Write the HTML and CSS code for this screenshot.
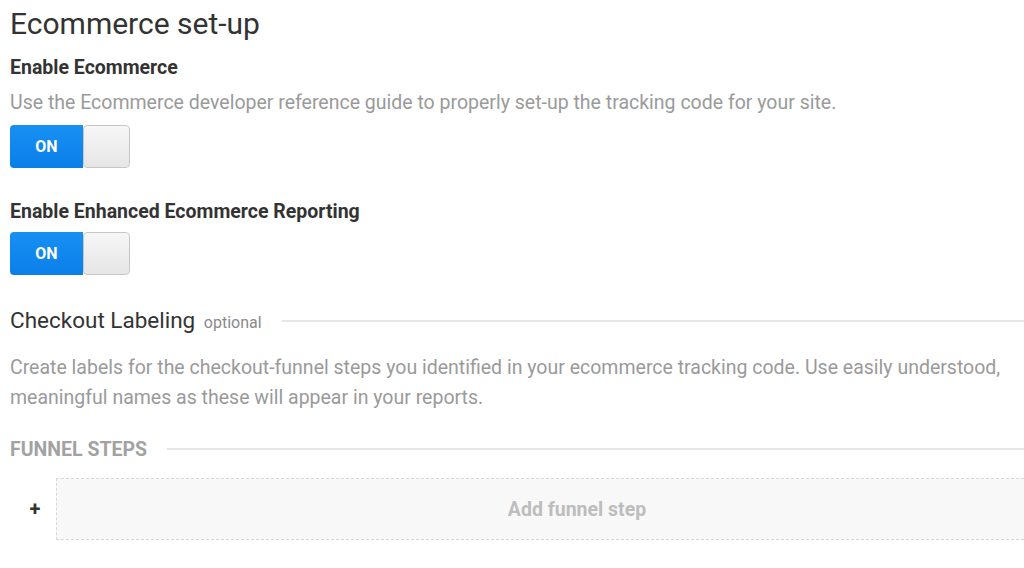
FILE: index.html
```html
<!DOCTYPE html>
<html lang="en">
<head>
    <meta charset="UTF-8">
    <meta name="viewport" content="width=device-width, initial-scale=1.0">
    <title>Ecommerce set-up</title>
    <link rel="stylesheet" href="styles.css">
</head>
<body>
    <main class="settings">
        <h1 class="page-title">Ecommerce set-up</h1>

        <section class="setting">
            <h3 class="setting-label">Enable Ecommerce</h3>
            <p class="setting-help">Use the Ecommerce developer reference guide to properly set-up the tracking code for your site.</p>
            <div class="toggle">
                <span class="toggle-on">ON</span>
                <span class="toggle-handle"></span>
            </div>
        </section>

        <section class="setting setting-tight">
            <h3 class="setting-label">Enable Enhanced Ecommerce Reporting</h3>
            <div class="toggle">
                <span class="toggle-on">ON</span>
                <span class="toggle-handle"></span>
            </div>
        </section>

        <div class="section-head">
            <h2 class="section-title">Checkout Labeling <small>optional</small></h2>
            <span class="rule"></span>
        </div>
        <p class="section-text">Create labels for the checkout-funnel steps you identified in your ecommerce tracking code. Use easily understood, meaningful names as these will appear in your reports.</p>

        <div class="section-head funnel-head">
            <h4 class="funnel-title">FUNNEL STEPS</h4>
            <span class="rule"></span>
        </div>

        <div class="funnel-row">
            <span class="funnel-plus">+</span>
            <button class="funnel-add" type="button">Add funnel step</button>
        </div>
    </main>
</body>
</html>
```

FILE: styles.css
```css
:root {
    --text-color: #333333;
    --muted-color: #9a9a9a;
    --rule-color: #e6e6e6;
}

html {
    overflow: hidden;
}

body {
    font-family: Roboto, 'Liberation Sans', Arial, sans-serif;
    margin: 0;
    padding: 4px 0 0 10px;
    background-color: #ffffff;
    color: var(--text-color);
}

/* the panel continues past the right edge of the window, so it stops there */
.settings {
    width: 1014px;
}

.page-title {
    margin: 0;
    font-size: 30px;
    line-height: 40px;
    font-weight: 400;
}

.setting {
    margin-top: 12px;
}

.setting-tight {
    margin-top: 32px;
}

.setting-label {
    margin: 0;
    font-size: 19.5px;
    line-height: 24px;
    font-weight: 700;
}

.setting-help {
    margin: 11px 0 0;
    font-size: 19.5px;
    line-height: 24px;
    color: var(--muted-color);
}

.setting-help + .toggle {
    margin-top: 10px;
}

.setting-label + .toggle {
    margin-top: 8px;
}

.toggle {
    display: flex;
    width: 120px;
    height: 43px;
    border-radius: 4px;
    overflow: hidden;
}

.toggle-on {
    width: 73px;
    display: flex;
    align-items: center;
    justify-content: center;
    background: linear-gradient(#1790f3, #0a7fe9);
    color: white;
    font-size: 16px;
    font-weight: 700;
}

.toggle-handle {
    flex: 1;
    background: linear-gradient(#f6f6f6, #e6e6e6);
    border: 1px solid #c6c6c6;
    border-radius: 4px;
}

.section-head {
    display: flex;
    align-items: center;
    margin-top: 30px;
}

.section-title {
    margin: 0;
    font-size: 22.5px;
    line-height: 30px;
    font-weight: 400;
    white-space: nowrap;
}

.section-title small {
    font-size: 16px;
    color: #8a8a8a;
    margin-left: 3px;
}

.rule {
    flex: 1;
    height: 2px;
    margin-left: 20px;
    margin-bottom: 2px;
    background-color: var(--rule-color);
}

.section-text {
    margin: 15px 0 0;
    width: 1000px;
    font-size: 19.5px;
    line-height: 30px;
    color: var(--muted-color);
}

.funnel-head {
    margin-top: 25px;
}

.funnel-title {
    margin: 0;
    font-size: 19.5px;
    line-height: 24px;
    font-weight: 700;
    color: #a2a2a2;
    white-space: nowrap;
}

.funnel-row {
    display: flex;
    align-items: center;
    margin-top: 16px;
}

.funnel-plus {
    width: 46px;
    box-sizing: border-box;
    padding-left: 4px;
    text-align: center;
    font-size: 20px;
    font-weight: 700;
    color: #333;
}

/* the box's right side is off-screen; padding keeps the label at its centre */
.funnel-add {
    flex: 1;
    height: 62px;
    padding: 0 0 0 73px;
    background-color: #f8f8f8;
    border: 1px dashed #d8d8d8;
    border-right: none;
    font-family: inherit;
    font-size: 19.5px;
    font-weight: 700;
    color: #bdbdbd;
    cursor: pointer;
}
```
